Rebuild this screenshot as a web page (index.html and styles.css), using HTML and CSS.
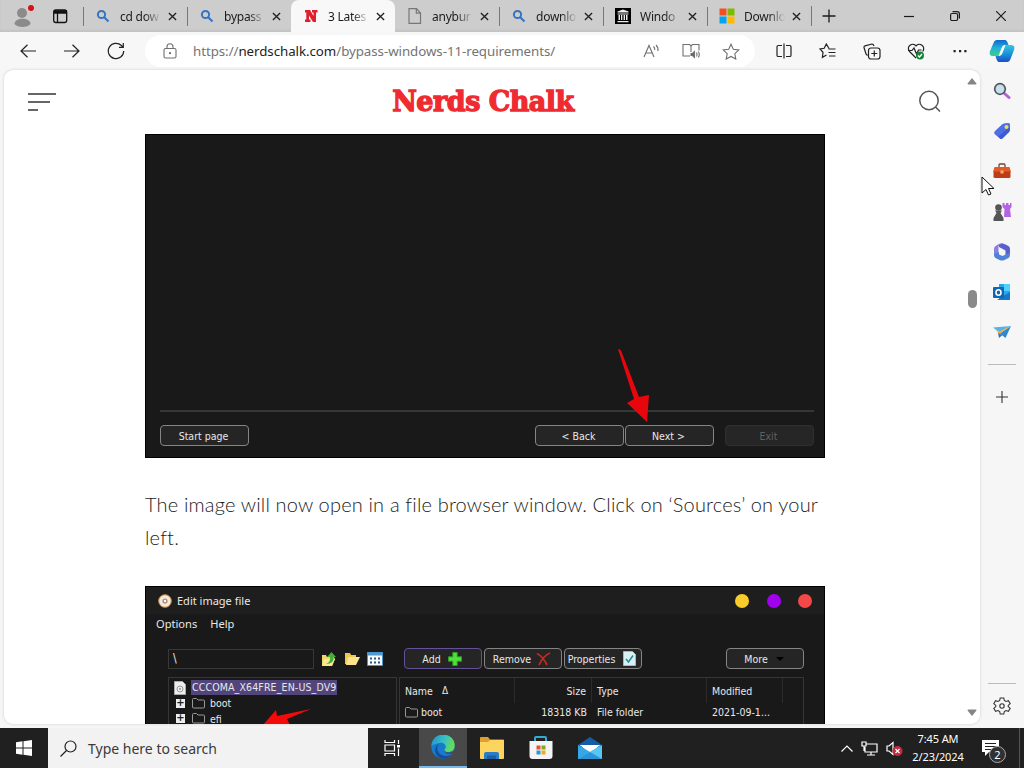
FILE: index.html
```
<!DOCTYPE html>
<html lang="en">
  <head>
    <meta charset="UTF-8" />
    <meta name="viewport" content="width=device-width, initial-scale=1.0" />
    <title>3 Latest Ways to Bypass Windows 11 Requirements</title>
    <link rel="stylesheet" href="styles.css">
  </head>
  <body>
    <div class="tabs">
      <div class="profile">
        <svg width="36" height="31" viewBox="0 0 36 31"><circle cx="22" cy="13" r="5" fill="#8b8b8b"/><path d="M14.500 24c0-7 16-7 16 0-3 4-13 4-16 0z" fill="#8b8b8b"/><circle cx="31" cy="8" r="3" fill="#d8101c"/></svg>
        <svg width="48" height="31" viewBox="0 0 48 31" fill="none" stroke="#111" stroke-width="1.300"><rect x="17.700" y="10" width="13" height="12.500" rx="2.200"/><path d="M18 12h13" stroke-width="3.500"/><path d="M21.500 13v9"/></svg>
      </div>
      <div class="tab">
        <svg class="fav" viewBox="0 0 16 16" fill="none" stroke="#3574c2" stroke-width="2"><circle cx="6.500" cy="6.500" r="3.600"/><path d="M9.200 9.200l4.300 4.300"/></svg>
        <span class="tab-title">cd dow</span>
        <svg class="close" viewBox="0 0 10 10"><path d="M1 1l8 8M9 1L1 9"/></svg>
      </div>
      <div class="tab">
        <svg class="fav" viewBox="0 0 16 16" fill="none" stroke="#3574c2" stroke-width="2"><circle cx="6.500" cy="6.500" r="3.600"/><path d="M9.200 9.200l4.300 4.300"/></svg>
        <span class="tab-title">bypass</span>
        <svg class="close" viewBox="0 0 10 10"><path d="M1 1l8 8M9 1L1 9"/></svg>
      </div>
      <div class="tab active">
        <svg class="fav" viewBox="0 0 16 16" fill="#e0202e"><path d="M2 2h5l3.500 6V4.500H9V2h5.500v2.500H13V14h-3L6 7.500v4h1.500V14H2v-2.500h1.300v-7H2z"/></svg>
        <span class="tab-title">3 Lates</span>
        <svg class="close" viewBox="0 0 10 10"><path d="M1 1l8 8M9 1L1 9"/></svg>
      </div>
      <div class="tab first">
        <svg class="fav" viewBox="0 0 16 16" fill="none" stroke="#777" stroke-width="1.200"><path d="M2 .6h7.500L13.500 5v10.400H2zM9.300 .8V5.200h4"/></svg>
        <span class="tab-title">anybur</span>
        <svg class="close" viewBox="0 0 10 10"><path d="M1 1l8 8M9 1L1 9"/></svg>
      </div>
      <div class="tab">
        <svg class="fav" viewBox="0 0 16 16" fill="none" stroke="#3574c2" stroke-width="2"><circle cx="6.500" cy="6.500" r="3.600"/><path d="M9.200 9.200l4.300 4.300"/></svg>
        <span class="tab-title">downlo</span>
        <svg class="close" viewBox="0 0 10 10"><path d="M1 1l8 8M9 1L1 9"/></svg>
      </div>
      <div class="tab">
        <svg class="fav" viewBox="0 0 16 16"><path d="M0 0h16v16H0z"/><path d="M8 1.500l5.500 2v1h-11v-1zM2.500 5.500h11v1h-11zM3.500 7h1.500v5H3.500zM6 7h1.300v5H6zM8.600 7H10v5H8.600zM11 7h1.500v5H11zM2.500 13h11v1.200h-11z" fill="#eee"/></svg>
        <span class="tab-title">Windo</span>
        <svg class="close" viewBox="0 0 10 10"><path d="M1 1l8 8M9 1L1 9"/></svg>
      </div>
      <div class="tab">
        <svg class="fav" viewBox="0 0 16 16"><path d="M.5.500h7v7h-7z" fill="#f25022"/><path d="M8.500.500h7v7h-7z" fill="#7fba00"/><path d="M.5 8.500h7v7h-7z" fill="#00a4ef"/><path d="M8.500 8.500h7v7h-7z" fill="#ffb900"/></svg>
        <span class="tab-title">Downlo</span>
        <svg class="close" viewBox="0 0 10 10"><path d="M1 1l8 8M9 1L1 9"/></svg>
      </div>
      <div class="new-tab">
        <svg width="14" height="14" viewBox="0 0 14 14"><path d="M7 .5v13M.5 7h13"/></svg>
      </div>
      <div class="window-buttons">
        <svg width="10" height="10" viewBox="0 0 10 10"><path d="M0 5.500h10"/></svg>
        <svg width="10" height="10" viewBox="0 0 10 10"><rect x=".6" y="2.500" width="7" height="7" rx="1.500"/><path d="M2.500 .6h4.500a2.400 2.400 0 0 1 2.400 2.400v4.500"/></svg>
        <svg width="10" height="10" viewBox="0 0 10 10"><path d="M0 0l10 10M10 0L0 10"/></svg>
      </div>
    </div>

    <div class="toolbar">
      <div class="tool"><svg width="16" height="14" viewBox="0 0 16 14"><path d="M16 7H1M7.500 .7L1 7l6.500 6.300"/></svg></div>
      <div class="tool"><svg width="16" height="14" viewBox="0 0 16 14"><path d="M0 7h15M8.500 .7L15 7l-6.500 6.300"/></svg></div>
      <div class="tool"><svg width="18" height="18" viewBox="0 0 18 18"><path d="M16.700 9a7.700 7.700 0 1 1-2.300-5.500l1.600 1.600M16.300 1v4.300H12"/></svg></div>
      <div class="address">
        <svg class="lock" width="14" height="16" viewBox="0 0 14 16"><rect x="1" y="5.500" width="12" height="9.500" rx="1.500"/><path d="M4 5.500V3.700a3 3 0 0 1 6 0v1.800"/><circle cx="7" cy="10.200" r=".6"/></svg>
        <span class="url">https://<b>nerdschalk.com</b>/bypass-windows-11-requirements/</span>
        <div class="address-icons">
          <svg width="18" height="16" viewBox="0 0 18 16"><path d="M2 14L7 2.500 12 14M3.800 10h6.400M11.500 3.500q1.500 1.500 1.200 3.500M14 2q2.500 2.500 2 6"/></svg>
          <svg width="18" height="16" viewBox="0 0 18 16"><path d="M8 13H1V1.500h6.500L9 3l1.500-1.500H17V7.500M9 3v6"/><path d="M9 10.500h1.500l2-2v6l-2-2H9z" fill="#666"/><path d="M14.500 9.500q1 2 0 4M16.300 8.500q2 3 0 6"/></svg>
          <svg width="18" height="17" viewBox="0 0 18 17"><path d="M9 1.200l2.300 5 5.500.7-4 3.800 1 5.400L9 13.500l-4.800 2.600 1-5.400-4-3.800 5.500-.7z"/></svg>
        </div>
      </div>
      <div class="tool"><svg width="16" height="16" viewBox="0 0 16 16"><path d="M6 2.500H2.300Q1 2.500 1 3.800v8.400q0 1.300 1.300 1.300H6M10 2.500h3.700q1.300 0 1.300 1.300v8.400q0 1.300-1.300 1.300H10M8 .5v15"/></svg></div>
      <div class="tool"><svg width="18" height="16" viewBox="0 0 18 16"><path d="M10 5.500L7.300 1 5.200 5.300 1 6l3 3.300-.6 5L7.500 12M9.500 6h7M9.500 9.500h7M10 13h6.500"/></svg></div>
      <div class="tool"><svg width="18" height="17" viewBox="0 0 18 17"><path d="M4.500 12.500L3 11 1 4.500Q.8 3.200 2 2.800L9 1q1.300 0 2 2"/><rect x="5.500" y="5" width="11.500" height="11" rx="2.500"/><path d="M11.300 7.500v6M8.300 10.500h6"/></svg></div>
      <div class="tool"><svg width="18" height="17" viewBox="0 0 18 17"><path d="M9 15L2.500 8.500C-1.500 3 6-1 9 3c3-4 10.500 0 6.700 5.500M1 7.500h4L7 5l2.500 6 2-4h3"/><circle cx="13" cy="12.500" r="4" fill="#16833b" stroke="none"/><path d="M11 12.500l1.500 1.500 2.500-3" stroke="#fff"/></svg></div>
      <div class="tool"><svg width="14" height="4" viewBox="0 0 14 4"><path d="M.5 1h2.200v2.200H.5zM6 1h2.200v2.200H6zM11.300 1h2.200v2.200h-2.200z" fill="#222" stroke="none"/></svg></div>
      <div class="tool"><svg width="26" height="24" viewBox="0 0 26 24" stroke="none">
        <defs>
          <linearGradient id="cop1" x1="0" y1="0" x2="0" y2="1"><stop offset="0" stop-color="#1268d0"/><stop offset=".5" stop-color="#22b2d8"/><stop offset="1" stop-color="#40cf82"/></linearGradient>
          <linearGradient id="cop2" x1="0" y1="0" x2="0" y2="1"><stop offset="0" stop-color="#38c6dc"/><stop offset=".55" stop-color="#1790da"/><stop offset="1" stop-color="#204cc6"/></linearGradient>
        </defs>
        <path d="M8 1h8q2 0 3.500 5h-4q-2 0-3 3l-3 8H4q-4.500 0-3-5L4.500 4q1-3 3.500-3z" fill="url(#cop1)"/>
        <path d="M18 23h-8q-2 0-3.500-6h4q2 0 3-3l3-8H22q4.500 0 3 5l-3.500 9q-1 3-3.500 3z" fill="url(#cop2)"/></svg></div>
    </div>

    <div class="main">
      <div class="page">
        <div class="content">
          <div class="site-header">
            <div class="menu"><i></i><i></i><i></i></div>
            <div class="logo"><span>Nerds Chalk</span></div>
            <svg class="site-search" width="24" height="24" viewBox="0 0 24 24"><circle cx="11" cy="10.500" r="9.200"/><path d="M17.500 17L22 21.500"/></svg>
          </div>
          <div class="article">
            <div class="shot wizard">
              <div class="wizard-footer">
                <span class="btn">Start page</span>
                <span class="btn back">&lt; Back</span>
                <span class="btn">Next &gt;</span>
                <span class="btn disabled">Exit</span>
              </div>
              <svg class="arrow" width="32" height="76" viewBox="0 0 32 76"><path d="M0 0q3 0 4 4L21 48l10-2-2 27L9 54l7-4z" fill="#e8060d"/></svg>
            </div>
            <p>The image will now open in a file browser window. Click on ‘Sources’ on your<br>left.</p>
            <div class="shot editor">
              <div class="editor-title">
                <svg width="14" height="14" viewBox="0 0 14 14"><circle cx="7" cy="7" r="6.300" fill="#f1e9dd" stroke="#d18541"/><circle cx="7" cy="7" r="2.600" fill="#b08a72"/><circle cx="7" cy="7" r="1.200" fill="#fff"/></svg>
                <span>Edit image file</span>
                <i class="yellow"></i><i class="purple"></i><i class="red"></i>
              </div>
              <div class="editor-menu"><span>Options</span><span>Help</span></div>
              <div class="editor-tools">
                <div class="path">\</div>
                <div class="path-icons">
                  <svg width="16" height="16" viewBox="0 0 16 16"><path d="M1 4h4l1 2h7l1 2-3 7H1z" fill="#eed66c"/><path d="M1 15l2-7h11l-3 7z" fill="#fbe98d"/><path d="M5 13q5-2 4-7H6l4.500-5L15 6h-2.500q1 7-7.500 7z" fill="#3fb036"/></svg>
                  <svg width="16" height="16" viewBox="0 0 16 16"><path d="M1 2h5l1 2h5v9H1z" fill="#f0c74e"/><path d="M2 14l2-8h12l-4 8z" fill="#fbe48b"/></svg>
                  <svg width="16" height="14" viewBox="0 0 16 14"><path d="M.5.500h15v13H.5z" fill="#f5fbff" stroke="#4e94cc"/><path d="M1 1h14v2.500H1z" fill="#4e9ad4"/><path d="M3 5.500h2v2H3zM7 5.500h2v2H7zM11 5.500h2v2h-2zM3 9.500h2v2H3zM7 9.500h2v2H7zM11 9.500h2v2h-2z" fill="#31567c"/></svg>
                </div>
                <span class="btn add">Add <svg width="14" height="14" viewBox="0 0 14 14"><path d="M4.800.500h4.400v4.300h4.300v4.400H9.200v4.300H4.800V9.200H.5V4.800h4.300z" fill="#4fe03c" stroke="#2e9d22"/></svg></span>
                <span class="btn">Remove <svg width="15" height="14" viewBox="0 0 15 14"><path d="M1 1.500q6 3 10 11.500M14 1Q7 4 3 13" fill="none" stroke="#c5281e" stroke-width="1.800"/></svg></span>
                <span class="btn props">Properties <svg width="13" height="15" viewBox="0 0 13 15"><path d="M.5.500h9l3 3v11H.5z" fill="#d9f0f2" stroke="#9fb9bd"/><path d="M3 8l2.500 3L10 4.500" fill="none" stroke="#2c8c9c" stroke-width="1.600"/></svg></span>
                <span class="btn more">More <svg width="8" height="4" viewBox="0 0 8 4"><path d="M0 0h8L4 4z" fill="#000"/></svg></span>
              </div>
              <div class="panes">
                <div class="tree">
                  <div class="node root"><svg width="12" height="14" viewBox="0 0 12 14"><path d="M.5.500h8l3 3v10H.5z" fill="#eee" stroke="#aaa"/><circle cx="6" cy="8" r="3" fill="none" stroke="#999"/><circle cx="6" cy="8" r="1" fill="#999"/></svg><span class="selected">CCCOMA_X64FRE_EN-US_DV9</span></div>
                  <div class="node"><i>+</i><svg class="folder" viewBox="0 0 13 11"><path d="M.5 9V1.500Q.5.500 1.500.500h3L6 2h5.500q1 0 1 1v6q0 1-1 1h-10q-1 0-1-1z"/></svg><span>boot</span></div>
                  <div class="node"><i>+</i><svg class="folder" viewBox="0 0 13 11"><path d="M.5 9V1.500Q.5.500 1.500.500h3L6 2h5.500q1 0 1 1v6q0 1-1 1h-10q-1 0-1-1z"/></svg><span>efi</span></div>
                </div>
                <div class="files">
                  <div class="row head"><span>Name &nbsp;&nbsp;<small>Δ</small></span><span class="size">Size</span><span>Type</span><span>Modified</span><span></span></div>
                  <div class="row"><span><svg class="folder" viewBox="0 0 13 11"><path d="M.5 9V1.500Q.5.500 1.500.500h3L6 2h5.500q1 0 1 1v6q0 1-1 1h-10q-1 0-1-1z"/></svg> boot</span><span class="size">18318 KB</span><span>File folder</span><span>2021-09-1...</span></div>
                  <div class="row"><span><svg class="folder" viewBox="0 0 13 11"><path d="M.5 9V1.500Q.5.500 1.500.500h3L6 2h5.500q1 0 1 1v6q0 1-1 1h-10q-1 0-1-1z"/></svg></span></div>
                </div>
              </div>
              <svg class="arrow" width="50" height="16" viewBox="0 0 50 16"><path d="M1 16L14 1l1 6L49 0 25 10l3 6z" fill="#f50a0c"/></svg>
            </div>
          </div>
        </div>
        <div class="scrollbar">
          <svg width="10" height="7" viewBox="0 0 10 7"><path d="M5 0l4.500 5.500q0 1-1 1h-7q-1 0-1-1z"/></svg>
          <div class="thumb"></div>
          <svg width="10" height="7" viewBox="0 0 10 7"><path d="M5 7L.5 1.500q0-1 1-1h7q1 0 1 1z"/></svg>
        </div>
      </div>
      <div class="sidebar">
        <div class="side"><svg width="18" height="18" viewBox="0 0 18 18"><path d="M11.500 11.500l4.500 4" stroke="#b560d8" stroke-width="3" stroke-linecap="round"/><circle cx="7" cy="7" r="5.300" fill="#c8e0ee" stroke="#50555b" stroke-width="1.700"/></svg></div>
        <div class="side"><svg width="18" height="18" viewBox="0 0 18 18"><path d="M2 9L9 2.500q1-1 3-1.200l3.500-.3q1.500 0 1.500 1.500v5q0 1.500-1 2.500l-6.500 6.500q-1.500 1-2.500 0l-5.500-4.500q-1-1.500.5-3z" fill="#4f6fe6"/><path d="M9 16.500l7-6.500q1-1 1-3V5L5 14.500l2 2q1 1 2 0z" fill="#3f5bd0"/><circle cx="13.500" cy="5" r="2" fill="#f3dc5c"/></svg></div>
        <div class="side"><svg width="20" height="16" viewBox="0 0 20 16"><path d="M7 4.500V2q0-1 1-1h4q1 0 1 1v2.500" fill="none" stroke="#74422e" stroke-width="1.300"/><path d="M2.500 4h15L19 9H1z" fill="#e25a2a"/><path d="M1.500 8.500h17V14q0 1-1.500 1H3q-1.500 0-1.500-1z" fill="#bd3c16"/><path d="M8.500 7.500h3v3h-3z" fill="#f1b070"/></svg></div>
        <div class="side"><svg width="20" height="18" viewBox="0 0 20 18"><path d="M10.500 0h2v2H14V0h2.500v2H18V0h1.500v4L18 6l1 8h-7l.5-8-2-2z" fill="#b465e4"/><circle cx="6.500" cy="4.500" r="3.300" fill="#555"/><path d="M3 7.500h7L8.500 10l3 5v3h-10v-3l3-5z" fill="#555"/></svg></div>
        <div class="side"><svg width="18" height="18" viewBox="0 0 18 18"><path d="M10 .5L5.500 3v6.500L1 12V6q0-2 1.500-3L6 1q2-1 4-.5z" fill="#8a80e0"/><path d="M9 .5q1.500 0 3 .8L15.500 3Q17 4 17 6v4.500L12.500 13V7.500L6 4V2z" fill="#5a5fcb"/><path d="M1 11l5-2v2.500L9.500 13 17 9.500V12q0 2-1.500 3l-4 2q-2.500 1-5 0l-4-2Q1 14 1 12z" fill="#5083d8"/></svg></div>
        <div class="side"><svg width="18" height="18" viewBox="0 0 18 18"><path d="M6 1h10q1 0 1 1v14q0 1-1 1H6z" fill="#28a8ea"/><path d="M11 1h6v7h-6z" fill="#51d0ff"/><path d="M4 17l13-8v7q0 1-1 1z" fill="#1679c7"/><rect y="4" width="11" height="11" rx="1" fill="#0f66b8"/><ellipse cx="5.500" cy="9.500" rx="2.500" ry="2.800" fill="none" stroke="#fff" stroke-width="1.600"/></svg></div>
        <div class="side"><svg width="18" height="16" viewBox="0 0 18 16"><path d="M0 3.500L18 2 6 8z" fill="#53b4e5"/><path d="M1.500 5L5 8l12.500-6L6 10z" fill="#f0a83a"/><path d="M5 9l1 5 3.500-3z" fill="#3a6fae"/><path d="M18 2l-5.500 12L7 9.500z" fill="#3186cf"/></svg></div>
        <hr>
        <div class="side add-app"><svg width="12" height="12" viewBox="0 0 12 12"><path d="M6 0v12M0 6h12"/></svg></div>
        <hr class="bottom">
        <div class="side gear"><svg width="18" height="18" viewBox="0 0 18 18"><path d="M7.200 1h3.600l.5 2.500 1.700 1 2.400-.8 1.800 3-2 1.700v1.200l2 1.700-1.800 3-2.400-.8-1.700 1-.5 2.500H7.200l-.5-2.500-1.700-1-2.400.8-1.800-3 2-1.700V8.400l-2-1.700 1.800-3 2.400.8 1.700-1z"/><circle cx="9" cy="9" r="2.200"/></svg></div>
      </div>
    </div>

    <div class="taskbar">
      <div class="start"><svg width="16" height="16" viewBox="0 0 16 16"><path d="M0 2.200L6.500 1.300v6.200H0zM7.500 1.200L16 0v7.500H7.500zM0 8.500h6.500v6.200L0 13.800zM7.500 8.500H16V16l-8.500-1.200z" fill="#fff"/></svg></div>
      <div class="search"><svg width="17" height="17" viewBox="0 0 17 17"><circle cx="10.500" cy="6.500" r="5.500"/><path d="M6.500 10.500L.5 16.500"/></svg><span>Type here to search</span></div>
      <div class="app view"><svg width="17" height="16" viewBox="0 0 17 16" fill="none" stroke="#fff" stroke-width="1.200"><path d="M1 0v2.500h9.500V0M1 16v-2.500h9.500V16M1 5h9.500v6H1zM14.500 0v4M14.500 8.500V16"/><path d="M13 5h3v2.500h-3z" fill="#fff" stroke="none"/></svg></div>
      <div class="app open"><svg width="24" height="24" viewBox="0 0 24 24">
        <defs><linearGradient id="edge1" x1="0" y1="0" x2="1" y2=".3"><stop offset="0" stop-color="#2391d0"/><stop offset=".6" stop-color="#36c1c2"/><stop offset="1" stop-color="#65dc58"/></linearGradient></defs>
        <circle cx="12" cy="12" r="11.700" fill="#1879cd"/>
        <path d="M.4 11C1-4 23-4 23.700 10c0 5-3 7-7 7-3 0-4-2-3-3 3-3-1-7-5-6-4 .5-7 2-8.300 3z" fill="url(#edge1)"/>
        <path d="M8 9c-4 4-1 12 7 12 3 0 5-1 6.500-3-3 6-10 7-14 4-5-4-4-11 .5-13z" fill="#114f9d"/>
        <path d="M13.500 13.500c-1 2 1 4.500 5 4 2 0 4-1 6-3v3l-3 1c-4 1-9 0-8-5z" fill="#494949"/></svg></div>
      <div class="app"><svg width="24" height="22" viewBox="0 0 24 22"><path d="M0 1q0-1 1-1h7l2 2.500h13q1 0 1 1V21H0z" fill="#dda02b"/><path d="M0 5h8l2-2h14v18q0 1-1 1H1q-1 0-1-1z" fill="#fcd45e"/><path d="M4 22v-5q0-2 2-2h11q2 0 2 2v5z" fill="#2a7cc9"/><path d="M7 18.500h9V22H7z" fill="#1c609f"/></svg></div>
      <div class="app"><svg width="24" height="24" viewBox="0 0 24 24"><path d="M6 6V2q0-1 1-1h9q1 0 1 1v4" fill="none" stroke="#36a9cf" stroke-width="2"/><path d="M.5 5h23v15q0 3-3 3h-17q-3 0-3-3z" fill="#f4f4f4"/><path d="M7.500 9.500h4v4h-4z" fill="#e55432"/><path d="M12.500 9.500h4v4h-4z" fill="#7aad22"/><path d="M7.500 14.500h4v4h-4z" fill="#2c99ce"/><path d="M12.500 14.500h4v4h-4z" fill="#ecac28"/></svg></div>
      <div class="app"><svg width="24" height="23" viewBox="0 0 24 23"><path d="M0 8l12-8 12 8v7H0z" fill="#135da8"/><path d="M2 8h20L12 17z" fill="#f4f7fa"/><path d="M0 8l12 7 12-7v14H0z" fill="#34a8e6"/><path d="M2 8h20l-10 6z" fill="#fff"/><path d="M0 22L24 8v14z" fill="#56c6f5"/><path d="M12 15l12 7H0z" fill="#2b94d9"/></svg></div>
      <div class="tray">
        <svg width="12" height="7" viewBox="0 0 12 7"><path d="M.5 6.500L6 1l5.500 5.500"/></svg>
        <svg width="17" height="15" viewBox="0 0 17 15"><path d="M5 3h11v8H4V6M10 11v3M6 14h8M1 1h4v4H1zM3 5v5"/></svg>
        <svg width="17" height="15" viewBox="0 0 17 15"><path d="M1 5v5h2l4 3.500v-12L3 5z"/><circle cx="11.500" cy="10" r="5" fill="#c42b3f" stroke="none"/><path d="M9.500 8l4 4M13.500 8l-4 4"/></svg>
      </div>
      <div class="clock"><span>7:45 AM</span><span>2/23/2024</span></div>
      <div class="notifications"><svg width="17" height="17" viewBox="0 0 17 17"><path d="M0 0h17v12H7l-4 4v-4H0z" fill="#fff"/><path d="M3 3.500h11M3 6.500h11M3 9.500h6" stroke="#222"/></svg><span class="badge">2</span></div>
    </div>

    <svg class="cursor" width="14" height="21" viewBox="0 0 14 21"><path d="M1 1v16l4-3.500L7.500 19l2.500-1-2.500-5.500H13z" fill="#fff" stroke="#111"/></svg>
  </body>
</html>
```
FILE: styles.css
```
* {
  box-sizing: border-box;
}

body {
  margin: 0;
  width: 1024px;
  height: 768px;
  overflow: hidden;
  display: flex;
  flex-direction: column;
  position: relative;
  background: #f6f6f6;
  color: #1b1b1b;
  font-family: 'Noto Sans', 'Open Sans', sans-serif;
  font-size: 12px;
}

svg {
  display: block;
  flex-shrink: 0;
}

/* tab strip */

.tabs {
  display: flex;
  height: 32px;
  background: #cdcdcd;
  box-shadow: inset 0 -2px 2px #c3c3c3;
}

.profile {
  display: flex;
  width: 83px;
}

.tab {
  display: flex;
  align-items: center;
  width: 104px;
  padding: 0 10px 0 11px;
}

.tab::before {
  content: '';
  width: 1px;
  height: 19px;
  margin-left: -11px;
  margin-right: 11px;
  background: #777;
}

.tab.active {
  background: #f8f8f8;
  border-radius: 8px 8px 0 0;
}

.tab.active::before,
.tab.first::before {
  background: none;
}

.fav {
  width: 16px;
  height: 16px;
}

.tab-title {
  width: 41px;
  margin-left: 9px;
  white-space: nowrap;
  font-size: 12px;
  letter-spacing: -0.25px;
  -webkit-mask-image: linear-gradient(to right, #000 60%, transparent);
  mask-image: linear-gradient(to right, #000 60%, transparent);
}

.close {
  width: 9px;
  height: 9px;
  margin-left: 7px;
  stroke: #222;
  stroke-width: 1.5;
}

.new-tab {
  display: flex;
  align-items: center;
  width: 72px;
  padding-left: 10px;
  border-left: 1px solid transparent;
  border-image: linear-gradient(transparent 20%, #777 20%, #777 80%, transparent 80%) 1;
  stroke: #1b1b1b;
  stroke-width: 1.3;
}

.window-buttons {
  display: flex;
  align-items: center;
  justify-content: space-between;
  width: 102px;
  margin-left: 21px;
  fill: none;
  stroke: #1b1b1b;
  stroke-width: 1.2;
}

/* toolbar */

.toolbar {
  display: flex;
  align-items: center;
  height: 38px;
  padding-left: 6px;
  background: #f7f7f7;
}

.tool {
  display: flex;
  align-items: center;
  justify-content: center;
  width: 44px;
  fill: none;
  stroke: #222;
  stroke-width: 1.2;
}

.tool:last-child {
  width: 40px;
}

.address {
  display: flex;
  align-items: center;
  width: 610px;
  height: 32px;
  margin: 0 7px;
  padding-left: 18px;
  border-radius: 16px;
  background: #fff;
}

.lock,
.address-icons {
  fill: none;
  stroke: #707070;
  stroke-width: 1.1;
}

.url {
  margin-left: 16px;
  color: #737373;
  font-size: 13.3px;
  letter-spacing: -0.05px;
  white-space: nowrap;
}

.url b {
  color: #222;
  font-weight: normal;
}

.address-icons {
  display: flex;
  gap: 22px;
  margin-left: auto;
  margin-right: 15px;
}

/* page */

.main {
  display: flex;
  height: 658px;
  padding: 0 0 4px 4px;
}

.page {
  display: flex;
  width: 976px;
  height: 654px;
  overflow: hidden;
  border-radius: 9px;
  background: #fff;
  box-shadow: 0 0 3px #ccc;
}

.content {
  width: 963px;
}

.site-header {
  display: flex;
  align-items: center;
  justify-content: space-between;
  height: 64px;
  padding: 0 25px 0 24px;
}

.menu {
  display: flex;
  flex-direction: column;
  gap: 6px;
  width: 28px;
}

.menu i {
  height: 2px;
  background: #666;
}

.menu i:nth-child(2) {
  width: 22px;
}

.menu i:nth-child(3) {
  width: 10px;
}

.logo {
  display: flex;
  justify-content: center;
  width: 186px;
  margin-right: 8px;
  color: #ef2b31;
  font-family: 'DejaVu Serif', serif;
  font-size: 27px;
  font-weight: bold;
  line-height: 30px;
  white-space: nowrap;
  -webkit-text-stroke: 1.3px #ef2b31;
}

.logo span {
  letter-spacing: -0.5px;
}

.site-search {
  fill: none;
  stroke: #555;
  stroke-width: 1.5;
}

.article {
  width: 680px;
  margin-left: 141px;
}

.article p {
  margin: 0;
  padding: 30px 0 32px;
  color: #222;
  font-family: Lato, sans-serif;
  font-size: 20px;
  font-weight: 300;
  line-height: 33px;
  letter-spacing: 0.17px;
  white-space: nowrap;
}

.scrollbar {
  display: flex;
  flex-direction: column;
  align-items: center;
  justify-content: space-between;
  width: 10px;
  padding: 8px 0;
  fill: #858585;
}

.thumb {
  width: 9px;
  height: 18px;
  margin-top: -197px;
  border-radius: 5px;
  background: #8a8a8a;
}

/* screenshots inside the article */

.shot {
  position: relative;
  overflow: hidden;
  border: 1px solid #000;
  background: #191919;
  color: #e8e8e8;
  font-family: 'DejaVu Sans Condensed', 'Noto Sans', sans-serif;
  font-size: 10.5px;
}

.arrow {
  position: absolute;
}

.btn {
  display: flex;
  align-items: center;
  justify-content: center;
  width: 89px;
  height: 21px;
  padding-right: 2px;
  border: 1px solid #858585;
  border-radius: 4px;
  background: #252525;
  white-space: nowrap;
}

.wizard {
  display: flex;
  flex-direction: column;
  justify-content: flex-end;
  height: 324px;
  padding: 0 10px 11px 14px;
}

.wizard-footer {
  display: flex;
  padding-top: 13px;
  border-top: 2px solid #363636;
}

.wizard-footer .back {
  margin-left: auto;
  margin-right: 1px;
}

.wizard-footer .disabled {
  margin-left: 11px;
  border-color: #303030;
  background: #262626;
  color: #606060;
}

.wizard .arrow {
  left: 472px;
  top: 214px;
}

.editor {
  height: 180px;
}

.editor-title {
  display: flex;
  align-items: center;
  gap: 5px;
  height: 27px;
  padding: 0 12px 0 12px;
  background: #1e1e1e;
  font-family: 'Noto Sans', sans-serif;
  font-size: 11px;
}

.editor-title i {
  width: 14px;
  height: 14px;
  margin-left: 13px;
  border-radius: 50%;
}

.editor-title .yellow {
  margin-left: auto;
  background: #f8cc29;
}

.editor-title .purple {
  background: #a100f0;
}

.editor-title .red {
  margin-left: 12px;
  background: #f44747;
}

.editor-menu {
  display: flex;
  gap: 13px;
  height: 20px;
  padding-left: 10px;
  font-family: 'Noto Sans', sans-serif;
  font-size: 11.1px;
  line-height: 19px;
}

.editor-tools {
  display: flex;
  align-items: center;
  height: 21px;
  margin-top: 14px;
  padding: 0 20px 0 22px;
}

.path {
  width: 146px;
  height: 20px;
  padding-left: 4px;
  border: 1px solid #383838;
  font-size: 12px;
  line-height: 16px;
}

.path-icons {
  display: flex;
  align-items: center;
  gap: 7px;
  margin-left: 7px;
  margin-right: 21px;
}

.editor-tools .btn {
  width: 78px;
  margin-right: 2px;
  gap: 5px;
}

.editor-tools .add {
  border-color: #65509a;
  gap: 7px;
}

.editor-tools .props {
  gap: 8px;
}

.editor-tools .more {
  margin-left: auto;
  margin-right: 0;
  gap: 8px;
}

.panes {
  display: flex;
  gap: 2px;
  height: 90px;
  margin-top: 8px;
  padding: 0 20px 0 22px;
}

.tree {
  width: 229px;
  border: 1px solid #363636;
  padding: 2px 0 0 5px;
}

.node {
  display: flex;
  align-items: center;
  height: 15.5px;
  padding-left: 2px;
}

.node.root {
  padding-left: 0;
}

.node i {
  width: 9px;
  height: 9px;
  margin-right: 7px;
  background: #eee;
  color: #222;
  font: bold 10px/8px 'DejaVu Sans', sans-serif;
  text-align: center;
}

.node span {
  margin-left: 5px;
}

.node .selected {
  padding: 0 1px;
  background: #51457b;
  line-height: 15px;
  letter-spacing: 0.13px;
}

.folder {
  width: 13px;
  height: 11px;
  fill: none;
  stroke: #999;
}

.files {
  flex: 1;
  border: 1px solid #363636;
}

.row {
  display: grid;
  grid-template-columns: 115px 77px 115px 76px 1fr;
  height: 18px;
  line-height: 16px;
}

.row span {
  display: flex;
  align-items: center;
  padding-left: 5px;
  white-space: nowrap;
}

.row .folder {
  margin-right: 3px;
}

.row .size {
  justify-content: flex-end;
  padding-right: 5px;
}

.row.head {
  height: 25px;
}

.head span {
  border-right: 1px solid #2b2b2b;
}

.head span:last-child {
  border: none;
}

.head small {
  font-size: 10px;
}

.editor .arrow {
  left: 116px;
  top: 122px;
}

/* sidebar */

.sidebar {
  display: flex;
  flex-direction: column;
  align-items: center;
  width: 44px;
  height: 658px;
  padding-top: 1px;
}

.side {
  display: flex;
  align-items: center;
  justify-content: center;
  width: 44px;
  height: 40.2px;
}

.sidebar hr {
  width: 28px;
  height: 1px;
  margin: 12px 0;
  border: none;
  background: #bbb;
}

.sidebar .bottom {
  margin: auto 0 2px;
}

.add-app,
.gear {
  fill: none;
  stroke: #333;
  stroke-width: 1.1;
}

.gear {
  margin-bottom: 2px;
}

/* taskbar */

.taskbar {
  display: flex;
  height: 40px;
  background: #202020;
  color: #fff;
}

.start,
.app {
  display: flex;
  align-items: center;
  justify-content: center;
  width: 49px;
}

.start {
  width: 48px;
}

.search {
  display: flex;
  align-items: center;
  width: 320px;
  padding-left: 12px;
  gap: 11px;
  background: #f2f2f2;
  color: #3a3a3a;
  font-size: 14px;
  fill: none;
  stroke: #222;
  stroke-width: 1.2;
}

.search span {
  stroke: none;
}

.app.view {
  width: 51px;
  padding-right: 2px;
}

.app.open {
  width: 48px;
  border-bottom: 2px solid #76b9ed;
  background: #494949;
}

.tray {
  display: flex;
  align-items: center;
  gap: 8px;
  margin-left: auto;
  fill: none;
  stroke: #fff;
  stroke-width: 1.2;
}

.clock {
  display: flex;
  flex-direction: column;
  align-items: center;
  justify-content: center;
  width: 54px;
  margin-left: 8px;
  font-size: 11px;
  line-height: 18px;
  letter-spacing: -0.1px;
}

.notifications {
  display: flex;
  align-items: center;
  width: 55px;
  margin-right: 4px;
  padding-left: 17px;
  border-right: 1px solid #555;
  position: relative;
}

.badge {
  position: absolute;
  left: 24px;
  top: 18px;
  width: 17px;
  height: 17px;
  border: 1px solid #aaa;
  border-radius: 50%;
  background: #303030;
  font-size: 11px;
  line-height: 15px;
  text-align: center;
}

.cursor {
  position: absolute;
  left: 981px;
  top: 176px;
}
```
